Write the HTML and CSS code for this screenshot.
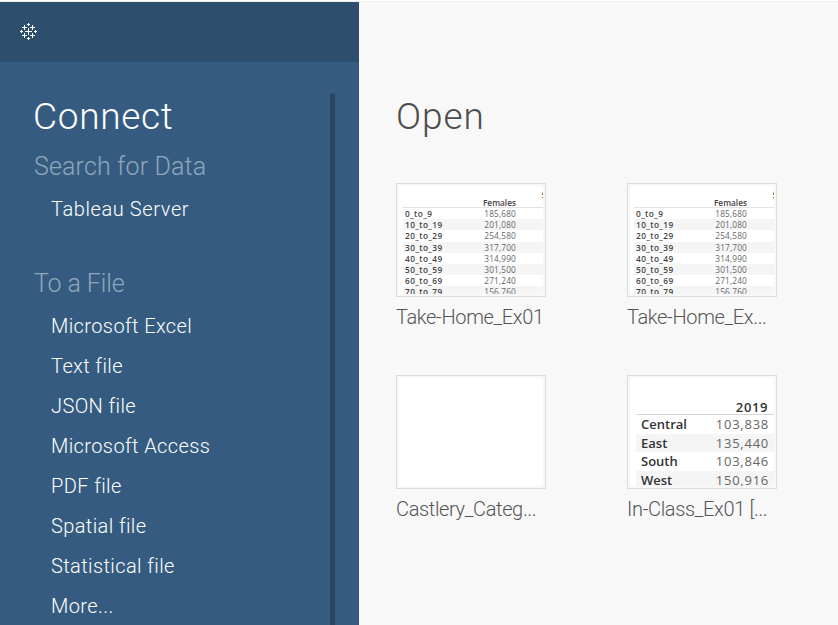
FILE: index.html
```html
<!DOCTYPE html>
<html lang="en">
<head>
<meta charset="utf-8">
<title>Tableau</title>
<link rel="stylesheet" href="styles.css">
</head>
<body>
<div class="app">
  <aside class="sidebar">
    <header class="topbar">
      <svg class="logo" width="17" height="17" viewBox="0 0 17 17" fill="none" stroke="#fff" shape-rendering="crispEdges">
        <path d="M5 8.5h7M8.5 5v7M2 4.5h5M4.5 2v5M10 4.5h5M12.5 2v5M2 12.5h5M4.5 10v5M10 12.5h5M12.5 10v5M7 1.5h3M8.5 0v3M7 15.5h3M8.5 14v3M0 8.5h3M1.5 7v3M14 8.5h3M15.5 7v3"/>
      </svg>
    </header>
    <div class="connect">
      <nav class="menu">
        <h1 class="title">Connect</h1>
        <h2 class="group search">Search for Data</h2>
        <ul class="links servers">
          <li>Tableau Server</li>
        </ul>
        <h2 class="group file">To a File</h2>
        <ul class="links">
          <li>Microsoft Excel</li>
          <li>Text file</li>
          <li>JSON file</li>
          <li>Microsoft Access</li>
          <li>PDF file</li>
          <li>Spatial file</li>
          <li>Statistical file</li>
          <li>More...</li>
        </ul>
      </nav>
      <div class="scrollbar"></div>
    </div>
  </aside>
  <main class="open">
    <h1 class="title">Open</h1>
    <div class="grid">
      <article class="card">
        <div class="thumb"><div class="sheet ages">
          <div class="head"><b>Females</b><i>S</i></div>
          <div class="row"><b>0_to_9</b><span>185,680</span></div>
          <div class="row"><b>10_to_19</b><span>201,080</span></div>
          <div class="row"><b>20_to_29</b><span>254,580</span></div>
          <div class="row"><b>30_to_39</b><span>317,700</span></div>
          <div class="row"><b>40_to_49</b><span>314,990</span></div>
          <div class="row"><b>50_to_59</b><span>301,500</span></div>
          <div class="row"><b>60_to_69</b><span>271,240</span></div>
          <div class="row"><b>70_to_79</b><span>156,760</span></div>
        </div></div>
        <p class="name">Take-Home_Ex01</p>
      </article>
      <article class="card">
        <div class="thumb"><div class="sheet ages">
          <div class="head"><b>Females</b><i>S</i></div>
          <div class="row"><b>0_to_9</b><span>185,680</span></div>
          <div class="row"><b>10_to_19</b><span>201,080</span></div>
          <div class="row"><b>20_to_29</b><span>254,580</span></div>
          <div class="row"><b>30_to_39</b><span>317,700</span></div>
          <div class="row"><b>40_to_49</b><span>314,990</span></div>
          <div class="row"><b>50_to_59</b><span>301,500</span></div>
          <div class="row"><b>60_to_69</b><span>271,240</span></div>
          <div class="row"><b>70_to_79</b><span>156,760</span></div>
        </div></div>
        <p class="name">Take-Home_Ex...</p>
      </article>
      <article class="card">
        <div class="thumb"><div class="sheet"></div></div>
        <p class="name">Castlery_Categ...</p>
      </article>
      <article class="card">
        <div class="thumb"><div class="sheet regions">
          <div class="head"><b>2019</b></div>
          <div class="row"><b>Central</b><span>103,838</span></div>
          <div class="row"><b>East</b><span>135,440</span></div>
          <div class="row"><b>South</b><span>103,846</span></div>
          <div class="row"><b>West</b><span>150,916</span></div>
        </div></div>
        <p class="name">In-Class_Ex01 [...</p>
      </article>
    </div>
  </main>
</div>
</body>
</html>
```
FILE: styles.css
```css
* { box-sizing: border-box; margin: 0; padding: 0; }
body {
  height: 625px;
  overflow: hidden;
  background: #f8f8f8;
  font-family: Roboto, "Liberation Sans", sans-serif;
  font-weight: 300;
  white-space: nowrap;
}
.app { display: flex; height: 625px; border-top: 1px solid #fff; }
.sidebar {
  display: flex;
  flex-direction: column;
  width: 359px;
  border-top: 1px solid #f0f0f0;
  background: #355c80;
}
.topbar { height: 60px; padding: 21px 20px; background: #2d4f6d; }
.logo { display: block; }
.connect { display: flex; flex: 1; justify-content: space-between; padding: 31px 24px 0 33px; min-height: 0; }
.scrollbar { width: 5px; background: #294661; border-radius: 3px 3px 0 0; }
.title { font-size: 37px; font-weight: 300; line-height: 46px; letter-spacing: 0.9px; }
.connect .title { padding-top: 1px; color: #fff; letter-spacing: 0.7px; }
.group { padding-left: 1px; font-size: 25px; font-weight: 300; line-height: 32px; color: #90a7bb; }
.search { margin-top: 11px; letter-spacing: 0.15px; }
.file { margin-top: 39px; letter-spacing: -0.1px; }
.links { list-style: none; padding: 6px 0 0 18px; color: #fff; font-size: 20px; letter-spacing: 0.4px; }
.servers { letter-spacing: 0.6px; }
.links li { height: 40px; line-height: 40px; }
.open { flex: 1; padding: 92px 0 0 37px; border-top: 1px solid #f0f0f0; color: #4c4c4c; }
.grid { display: grid; grid-template-columns: 150px 150px; column-gap: 81px; grid-auto-rows: 192px; margin-top: 43px; }
.thumb { height: 114px; padding: 2px; border: 1px solid #dcdcdc; }
.sheet { height: 108px; overflow: hidden; background: #fff; font-family: "Open Sans", "Noto Sans", sans-serif; }
.name { font-size: 20px; line-height: 40px; letter-spacing: -0.35px; color: #555; }
.row b, .head b { font-weight: 600; color: #444; }
.head, .row { display: flex; }
.ages { padding-left: 4px; font-size: 8.3px; }
.ages .head { position: relative; height: 22px; padding: 11px 27px 0 0; justify-content: flex-end; line-height: 11px; border-bottom: 1px solid #e2e2e2; }
.ages .head i { position: absolute; right: -3px; top: 3px; font-style: normal; font-weight: 600; color: #555; }
.ages .row { justify-content: space-between; height: 11.2px; line-height: 12px; padding: 0 27px 0 2px; font-weight: 400; color: #666; }
.ages .row b { letter-spacing: 0.4px; }
.ages .row span { letter-spacing: 0.15px; }
.row:nth-child(odd) { background: #f5f5f5; }
.regions { padding-left: 6px; font-size: 13px; }
.regions .head { height: 37px; padding: 20px 6px 0 0; justify-content: flex-end; line-height: 18px; letter-spacing: 0.6px; border-bottom: 1px solid #d5d5d5; }
.regions .row { justify-content: space-between; height: 18.5px; line-height: 18px; padding: 0 5px 0 5px; font-weight: 400; color: #666; }
.regions .row span { letter-spacing: 0.75px; }
.regions b { color: #333; }
```
